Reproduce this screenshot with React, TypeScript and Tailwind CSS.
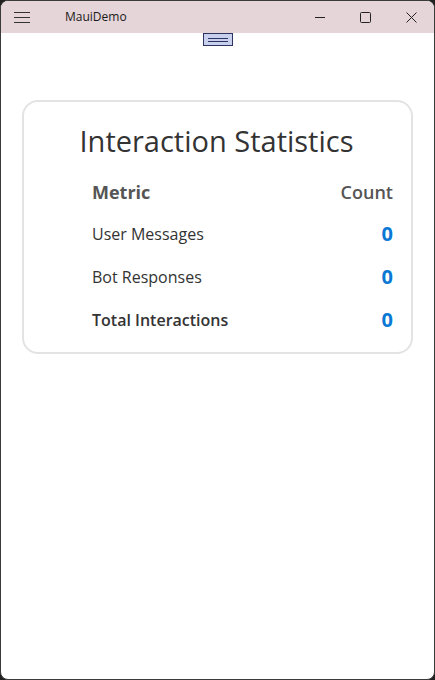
import React from 'react';

const rows = [
  { label: 'User Messages', value: 0, bold: false },
  { label: 'Bot Responses', value: 0, bold: false },
  { label: 'Total Interactions', value: 0, bold: true },
];

const TitleBar = () => (
  <div className="h-[32px] bg-[#e5d5d8] flex items-center text-[#1a1a1a] shrink-0">
    <svg width="46" height="32" viewBox="0 0 46 32" className="shrink-0">
      <path d="M13 11.5h16M13 16.5h16M13 21.5h16" stroke="#333" strokeWidth="1" />
    </svg>
    <span className="ml-[18px] text-[12px] font-['Open_Sans',sans-serif]">MauiDemo</span>
    <div className="ml-auto flex items-center h-full">
      <svg width="46" height="32" viewBox="0 0 46 32">
        <path d="M19 16.5h10" stroke="#222" strokeWidth="1" />
      </svg>
      <svg width="46" height="32" viewBox="0 0 46 32">
        <rect x="18.5" y="11.5" width="10" height="10" rx="1" fill="none" stroke="#222" strokeWidth="1" />
      </svg>
      <svg width="46" height="32" viewBox="0 0 46 32">
        <path d="M18.5 11.5l10 10M28.5 11.5l-10 10" stroke="#222" strokeWidth="1" />
      </svg>
    </div>
  </div>
);

export default function App() {
  return (
    <div className="w-[435px] h-[680px] bg-[#202020]">
      <div className="w-full h-full flex flex-col bg-white border border-[#3a3a3a] rounded-[8px] overflow-hidden font-['Open_Sans',sans-serif]">
        <TitleBar />
        <div className="flex justify-center">
          <div className="w-[30px] h-[13px] bg-[#c8d0ee] border border-[#2e3460] flex flex-col justify-center items-center gap-[2px]">
            <div className="w-[20px] h-px bg-[#2e3460]" />
            <div className="w-[20px] h-px bg-[#2e3460]" />
          </div>
        </div>
        <div className="mt-[54px] ml-[21px] w-[391px] h-[254px] border-2 border-[#e3e3e3] rounded-[16px] pt-[20px]">
          <h1 className="text-center text-[29px] leading-[38px] text-[#333333] ml-[-2px]">Interaction Statistics</h1>
          <div className="pl-[68px] pr-[18px] mt-[18px]">
            <div className="flex justify-between items-center h-[39px] mt-[-5px] text-[18px] text-[#555555]">
              <span className="font-bold">Metric</span>
              <span className="font-semibold">Count</span>
            </div>
            {rows.map((r) => (
              <div key={r.label} className="flex justify-between items-center h-[43px]">
                <span className={`text-[16px] text-[#333333] ${r.bold ? 'font-semibold' : ''}`}>{r.label}</span>
                <span className="text-[20px] font-bold text-[#0a78d4]">{r.value}</span>
              </div>
            ))}
          </div>
        </div>
      </div>
    </div>
  );
}
